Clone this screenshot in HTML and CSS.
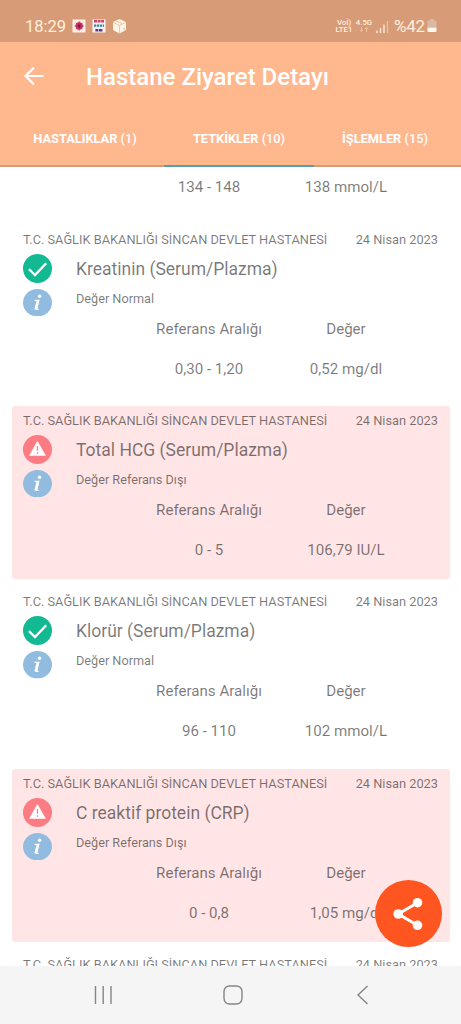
FILE: index.html
```html
<!DOCTYPE html>
<html lang="tr">
<head>
    <meta charset="UTF-8">
    <meta name="viewport" content="width=device-width, initial-scale=1.0">
    <title>Hastane Ziyaret Detayı</title>
    <link rel="stylesheet" href="styles.css">
</head>
<body>
    <!-- shared icons -->
    <svg class="defs" width="0" height="0">
        <symbol id="ok" viewBox="0 0 29 29">
            <circle cx="14.5" cy="14.5" r="14.5" fill="#12b993"/>
            <path d="M6 15.2l6 5.8L23.2 9.3" fill="none" stroke="#fff" stroke-width="2.3"/>
        </symbol>
        <symbol id="warn" viewBox="0 0 29 29">
            <circle cx="14.5" cy="14.5" r="14.5" fill="#fc7c83"/>
            <path d="M14.4 6.4L22.4 20.4H6.6z" fill="#fff" stroke="#fff" stroke-width="0.6" stroke-linejoin="round"/>
            <path d="M14.4 11v4.8M14.4 17.2v1.6" stroke="#fc7c83" stroke-width="1.3"/>
        </symbol>
        <symbol id="info" viewBox="0 0 29 27.4">
            <ellipse cx="14.5" cy="13.7" rx="14.5" ry="13.7" fill="#91bcdf"/>
            <circle cx="16.6" cy="7.3" r="1.7" fill="#fff"/>
            <path d="M11.6 11.3h4.1l-2.3 9h2.2" fill="none" stroke="#fff" stroke-width="1.3"/>
            <path d="M15 11.3l-2.3 9.2" stroke="#fff" stroke-width="2.7"/>
        </symbol>
    </svg>

    <!-- status bar -->
    <div class="status">
        <span class="clock">18:29</span>
        <svg class="notif" width="56" height="16" viewBox="0 0 56 16">
            <rect x="0.5" y="1.5" width="13" height="13" fill="#fbeee9"/>
            <circle cx="7.2" cy="8" r="3.7" fill="#c6315d"/>
            <path d="M7.2 3.4v9.2M2.6 8h9.2M4 4.800l6.400 6.400M10.400 4.800L4 11.200" stroke="#c6315d" stroke-width="1"/>
            <circle cx="7.2" cy="8" r="1.5" fill="#7c1640"/>
            <rect x="20.5" y="1.5" width="13" height="13" fill="#f7f1f3"/>
            <path d="M22 3.2h10" stroke="#c84468" stroke-width="2.4" stroke-dasharray="3 .6"/>
            <path d="M22 7.6h10" stroke="#308ba0" stroke-width="2.4" stroke-dasharray="2.2 .7"/>
            <path d="M23.4 12.2h7.6" stroke="#5b3a86" stroke-width="2.6" stroke-dasharray="3 .6"/>
            <path d="M47.5 1l6.5 3v8l-6.5 3.5L41 12V4z" fill="#fff3e6"/>
            <path d="M41 4.3l6.5 3.2L54 4.3M47.5 7.5v8M44 2.8l6.5 3.1M50.8 11l1.5-.8v2" fill="none" stroke="#e3b492" stroke-width="0.7"/>
        </svg>
        <div class="net">
            <span>Voİ)</span>
            <span>LTE1</span>
        </div>
        <div class="net fourg">
            <span>4.5G</span>
            <svg width="10" height="5" viewBox="0 0 10 5"><path d="M2.5 0v4.3M1 3l1.5 1.4L4 3M7.5 5V.7M6 2L7.5.6 9 2" fill="none" stroke="#f3cdae" stroke-width="0.7"/></svg>
        </div>
        <svg class="signal" width="13" height="12" viewBox="0 0 13 12">
            <path d="M1 9.500v2.500M4.500 7v5M8 3.500v8.500" stroke="#ffeedd" stroke-width="1.3"/>
            <path d="M11.500 0v12" stroke="#eac2a4" stroke-width="1.3"/>
        </svg>
        <span class="percent">%42</span>
        <svg width="10" height="14" viewBox="0 0 10 14">
            <path d="M3 0h4v1.500h1.500a1 1 0 0 1 1 1V8h-9V2.500a1 1 0 0 1 1-1H3z" fill="#d9b8a4"/>
            <path d="M.5 8.500h9V12a1 1 0 0 1-1 1h-7a1 1 0 0 1-1-1z" fill="#fff8ef"/>
        </svg>
    </div>

    <!-- header and tabs -->
    <header class="header">
        <div class="toolbar">
            <svg class="back" width="20" height="20" viewBox="0 0 20 20">
                <path d="M19.500 10H2M10 1.500L1.500 10l8.500 8.500" fill="none" stroke="#fff" stroke-width="2.200"/>
            </svg>
            <h1 class="title">Hastane Ziyaret Detayı</h1>
        </div>
        <nav class="tabs">
            <div class="tab">HASTALIKLAR <span>(1)</span></div>
            <div class="tab active">TETKİKLER <span>(10)</span></div>
            <div class="tab last">İŞLEMLER <span>(15)</span></div>
        </nav>
    </header>

    <!-- test results -->
    <main class="list">
        <section class="card partial">
            <div class="row values"><span>134 - 148</span><span>138 mmol/L</span></div>
        </section>

        <section class="card">
            <div class="top"><span class="hospital">T.C. SAĞLIK BAKANLIĞI SİNCAN DEVLET HASTANESİ</span><span class="date">24 Nisan 2023</span></div>
            <div class="main">
                <div class="icons">
                    <svg width="29" height="29"><use href="#ok"/></svg>
                    <svg width="29" height="27.4"><use href="#info"/></svg>
                </div>
                <div class="names"><h2>Kreatinin (Serum/Plazma)</h2><p>Değer Normal</p></div>
            </div>
            <div class="row labels"><span>Referans Aralığı</span><span>Değer</span></div>
            <div class="row values"><span>0,30 - 1,20</span><span>0,52 mg/dl</span></div>
        </section>

        <section class="card alert">
            <div class="top"><span class="hospital">T.C. SAĞLIK BAKANLIĞI SİNCAN DEVLET HASTANESİ</span><span class="date">24 Nisan 2023</span></div>
            <div class="main">
                <div class="icons">
                    <svg width="29" height="29"><use href="#warn"/></svg>
                    <svg width="29" height="27.4"><use href="#info"/></svg>
                </div>
                <div class="names"><h2>Total HCG (Serum/Plazma)</h2><p>Değer Referans Dışı</p></div>
            </div>
            <div class="row labels"><span>Referans Aralığı</span><span>Değer</span></div>
            <div class="row values"><span>0 - 5</span><span>106,79 IU/L</span></div>
        </section>

        <section class="card">
            <div class="top"><span class="hospital">T.C. SAĞLIK BAKANLIĞI SİNCAN DEVLET HASTANESİ</span><span class="date">24 Nisan 2023</span></div>
            <div class="main">
                <div class="icons">
                    <svg width="29" height="29"><use href="#ok"/></svg>
                    <svg width="29" height="27.4"><use href="#info"/></svg>
                </div>
                <div class="names"><h2>Klorür (Serum/Plazma)</h2><p>Değer Normal</p></div>
            </div>
            <div class="row labels"><span>Referans Aralığı</span><span>Değer</span></div>
            <div class="row values"><span>96 - 110</span><span>102 mmol/L</span></div>
        </section>

        <section class="card alert">
            <div class="top"><span class="hospital">T.C. SAĞLIK BAKANLIĞI SİNCAN DEVLET HASTANESİ</span><span class="date">24 Nisan 2023</span></div>
            <div class="main">
                <div class="icons">
                    <svg width="29" height="29"><use href="#warn"/></svg>
                    <svg width="29" height="27.4"><use href="#info"/></svg>
                </div>
                <div class="names"><h2>C reaktif protein (CRP)</h2><p>Değer Referans Dışı</p></div>
            </div>
            <div class="row labels"><span>Referans Aralığı</span><span>Değer</span></div>
            <div class="row values"><span>0 - 0,8</span><span>1,05 mg/dl</span></div>
        </section>

        <section class="card">
            <div class="top"><span class="hospital">T.C. SAĞLIK BAKANLIĞI SİNCAN DEVLET HASTANESİ</span><span class="date">24 Nisan 2023</span></div>
        </section>
    </main>

    <!-- floating share button -->
    <div class="share">
        <svg width="30" height="34" viewBox="0 0 30 34">
            <path d="M24.500 5.700L5.200 17l19.300 11.300" fill="none" stroke="#fff" stroke-width="3"/>
            <circle cx="24.500" cy="5.700" r="4.800" fill="#fff"/>
            <circle cx="5.200" cy="17" r="4.800" fill="#fff"/>
            <circle cx="24.500" cy="28.300" r="4.800" fill="#fff"/>
        </svg>
    </div>

    <!-- system navigation -->
    <footer class="nav">
        <svg width="20" height="20" viewBox="0 0 20 20"><path d="M2.500 1v18M10.200 1v18M18 1v18" stroke="#858585" stroke-width="1.400"/></svg>
        <svg width="20" height="20" viewBox="0 0 20 20"><rect x="1" y="1" width="18" height="18" rx="5.500" fill="none" stroke="#858585" stroke-width="1.400"/></svg>
        <svg width="20" height="20" viewBox="0 0 20 20"><path d="M15.500 1L6 10l9.500 9" fill="none" stroke="#858585" stroke-width="1.400"/></svg>
    </footer>
</body>
</html>
```
FILE: styles.css
```css
* {
    box-sizing: border-box;
}

body {
    margin: 0;
    height: 1024px;
    display: flex;
    flex-direction: column;
    overflow: hidden;
    background: #fff;
    color: rgba(0, 0, 0, 0.53);
    font-family: Roboto, "Liberation Sans", sans-serif;
}

svg {
    display: block;
    flex: none;
}

.defs {
    position: absolute;
}

/* status bar */
.status {
    height: 42px;
    flex: none;
    display: flex;
    align-items: center;
    padding: 10px 24px 0 25px;
    background: #d79c77;
    color: #ffeedd;
}

.clock {
    width: 47px;
    font-size: 16.5px;
}

.notif {
    margin-right: auto;
}

.net {
    display: flex;
    flex-direction: column;
    align-items: center;
    width: 18px;
    font-size: 7.8px;
    line-height: 7.5px;
    font-weight: 500;
}

.fourg {
    margin-left: 2px;
}

.fourg svg {
    margin: 1px 0 1.5px;
}

.signal {
    margin: 2px 5px 0 3px;
}

.percent {
    width: 33px;
    font-size: 17px;
    letter-spacing: -0.2px;
}

/* header */
.header {
    height: 125px;
    flex: none;
    display: flex;
    flex-direction: column;
    background: #ffb78d;
    color: #fff;
}

.toolbar {
    height: 69px;
    display: flex;
    align-items: center;
    padding: 0 0 2px 24px;
}

.title {
    margin: 2px 0 0 42px;
    font-size: 24px;
    font-weight: 500;
}

.tabs {
    height: 56px;
    display: flex;
}

.tab {
    width: 164px;
    padding-left: 6px;
    border-bottom: 2px solid #d69d79;
    font-size: 12.8px;
    line-height: 55px;
    font-weight: 700;
    text-align: center;
}

.tab span {
    font-weight: 500;
}

.tab.active {
    width: 150px;
    padding: 0;
    border-color: #52a0ae;
}

.tab.last {
    width: 147px;
    padding: 0 5px 0 0;
}

/* result list */
.list {
    flex: 1;
    min-height: 0;
    overflow: hidden;
    padding: 0.6px 11px 0 12px;
}

.card {
    height: 173.4px;
    margin-bottom: 8px;
    border-radius: 3px;
    overflow: hidden;
}

.card.partial {
    height: 49px;
}

.card.alert {
    background: #ffe5e5;
}

.top {
    display: flex;
    justify-content: space-between;
    padding: 0 12px 0 11px;
    font-size: 12.8px;
    line-height: 29px;
    white-space: nowrap;
}

.main {
    display: flex;
    height: 64px;
    padding-left: 11px;
}

.icons {
    display: flex;
    flex-direction: column;
    gap: 6px;
}

.names {
    margin-left: 24px;
}

.names h2 {
    margin: 0;
    font-size: 17.5px;
    font-weight: 400;
    line-height: 31px;
}

.names p {
    margin: 0;
    font-size: 12.7px;
    line-height: 27px;
}

.row {
    display: flex;
    padding-left: 128.5px;
    font-size: 15.1px;
}

.row span {
    width: 137px;
    text-align: center;
}

.labels {
    line-height: 23px;
}

.values {
    line-height: 56px;
}

.partial .values {
    line-height: 39px;
}

/* share button */
.share {
    position: absolute;
    left: 374.5px;
    top: 880px;
    width: 67px;
    height: 67px;
    border-radius: 50%;
    display: flex;
    align-items: center;
    justify-content: center;
    background: #fe5521;
}

/* bottom navigation */
.nav {
    height: 58px;
    flex: none;
    display: flex;
    justify-content: space-between;
    padding: 19px 89px 0 93px;
    background: #f5f5f5;
}
```
